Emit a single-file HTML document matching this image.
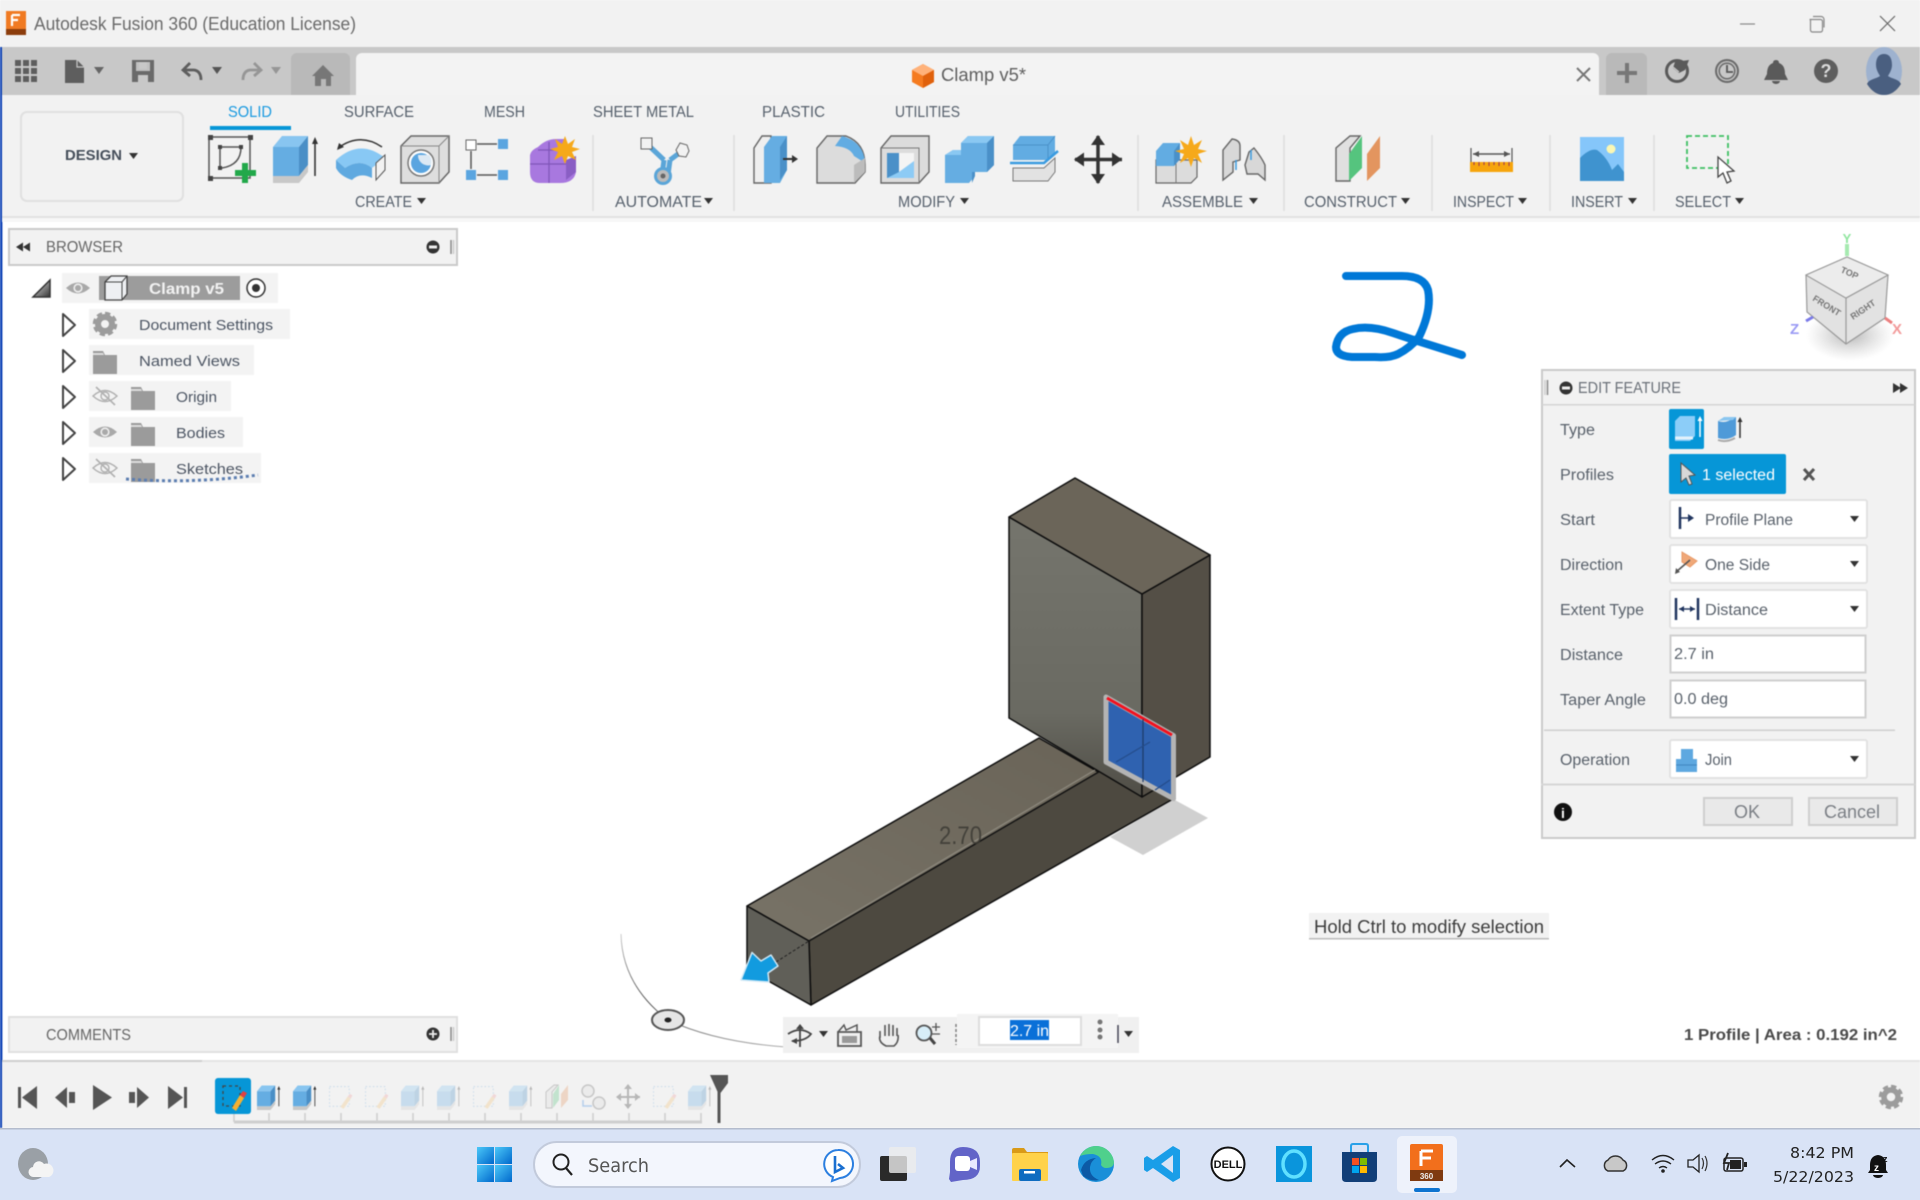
<!DOCTYPE html>
<html><head><meta charset="utf-8"><title>Autodesk Fusion 360</title>
<style>
html,body{margin:0;padding:0;background:#fff;width:1920px;height:1200px;overflow:hidden}
svg{display:block}
text{font-family:"Liberation Sans",sans-serif;fill:#56606c;font-size:15px}
.r{font-size:15.5px}
.l{font-size:15.5px;fill:#59616b}
.t{font-size:15px;fill:#4c5563}
</style></head><body>
<svg width="1920" height="1200" viewBox="0 0 1920 1200" xmlns="http://www.w3.org/2000/svg">
<defs>
<linearGradient id="lf" x1="0" y1="0" x2="0" y2="1"><stop offset="0" stop-color="#75756d"/><stop offset=".7" stop-color="#6a6a62"/><stop offset="1" stop-color="#4f4d46"/></linearGradient>
<linearGradient id="tp" x1="0" y1="1" x2="1" y2="0"><stop offset="0" stop-color="#787367"/><stop offset="1" stop-color="#696357"/></linearGradient>
<linearGradient id="tri" x1="0" y1="0" x2="1" y2="1"><stop offset="0" stop-color="#eee"/><stop offset="1" stop-color="#333"/></linearGradient>
<linearGradient id="arcg" x1="0" y1="0" x2="0" y2="1"><stop offset="0" stop-color="#ccc"/><stop offset=".6" stop-color="#555"/><stop offset="1" stop-color="#aaa"/></linearGradient>
<radialGradient id="sh"><stop offset="0" stop-color="#999" stop-opacity=".7"/><stop offset="1" stop-color="#bbb" stop-opacity="0"/></radialGradient>
<linearGradient id="win" x1="0" y1="0" x2="1" y2="1"><stop offset="0" stop-color="#4cc8f8"/><stop offset="1" stop-color="#0068cc"/></linearGradient>
<g id="ext"><path d="M0 12L9 1H35L26 12Z" fill="#88c5f0"/><path d="M0 12H26V41H0Z" fill="#65ade2"/><path d="M26 12L35 1V30L26 41Z" fill="#4a8fc6"/><path d="M0 41H26L35 30V37L26 48H0Z" fill="#c8c8c8"/><path d="M42 8V41" stroke="#333" stroke-width="1.6"/><path d="M39 9L42 2L45 9Z" fill="#333"/></g>
<g id="sk"><rect x="1" y="3" width="38" height="38" fill="none" stroke="#7aaedc" stroke-width="2" stroke-dasharray="3 4"/><path d="M22 42L36 22L42 26L28 46Z" fill="#f4c478"/><path d="M36 22L42 26L45 20L40 17Z" fill="#f09a9a"/></g>
<g id="eye"><path d="M-12 0Q0 -11 12 0Q0 11 -12 0Z" fill="#a9a9a9"/><circle r="4.6" fill="#eee"/><circle r="3" fill="#a9a9a9"/></g>
<g id="eyx"><path d="M-12 0Q0 -11 12 0Q0 11 -12 0Z" fill="none" stroke="#b0b0b0" stroke-width="1.4"/><circle r="4" fill="none" stroke="#b0b0b0" stroke-width="1.4"/><path d="M-9 -9L10 9" stroke="#b0b0b0" stroke-width="1.6"/></g>
<g id="fo"><path d="M0 1H10L12 5H24V24H0Z" fill="#9b9b9b"/><path d="M0 3H10L11 5H0Z" fill="#ddd"/></g>
<path id="ar" d="M0 0L12 11L0 22V0Z" fill="#fff" stroke="#444" stroke-width="2" stroke-linejoin="round"/>
<path id="ca" d="M0 0H9L4.5 6Z" fill="#333"/>
<path id="cg" d="M0 0H9L4.5 6Z" fill="#333"/>
</defs>

<rect width="1920" height="1200" fill="#fff"/>
<g style="filter:blur(.55px)">
<!-- title -->
<rect width="1920" height="47" fill="#f2f2f2"/>
<rect x="0" y="47" width="2.4" height="1081" fill="#0a3fb4"/>
<path d="M6 11H26V35H6Z" fill="#f07a22"/><path d="M6 29H26V35H6Z" fill="#8c3d0c"/><path d="M12 15H20M12 15V26M12 20H18" stroke="#fff" stroke-width="2.2" fill="none"/>
<text x="34" y="30" font-size="18.5" style="font-size:18.5px;fill:#6a6a6a" textLength="322" lengthAdjust="spacingAndGlyphs">Autodesk Fusion 360 (Education License)</text>
<path d="M1740 24H1755" stroke="#888" stroke-width="1.2"/>
<path d="M1809.5 19.5h11a2 2 0 0 1 2 2v8.500a2 2 0 0 1-2 2h-8a2 2 0 0 1-2-2V19.5z" fill="none" stroke="#888" stroke-width="1.200"/><path d="M1813 16.500h8a3 3 0 0 1 3 3v8" fill="none" stroke="#888" stroke-width="1.200"/>
<path d="M1880 16L1895 31M1895 16L1880 31" stroke="#666" stroke-width="1.200"/>

<!-- tab bar -->
<rect x="2" y="47" width="1918" height="48" fill="#c8c8c8"/>
<path d="M356 95V59a6 6 0 0 1 6-6H1593a6 6 0 0 1 6 6V95Z" fill="#f3f3f3"/>
<path d="M291 95V59a6 6 0 0 1 6-6H344a6 6 0 0 1 6 6V95Z" fill="#b9b9b9"/>
<path d="M1606 95V59a6 6 0 0 1 6-6H1641a6 6 0 0 1 6 6V95Z" fill="#b9b9b9"/>
<!-- grid -->
<g fill="#5e5e5e"><rect x="15" y="60" width="6" height="6"/><rect x="23" y="60" width="6" height="6"/><rect x="31" y="60" width="6" height="6"/><rect x="15" y="68" width="6" height="6"/><rect x="23" y="68" width="6" height="6"/><rect x="31" y="68" width="6" height="6"/><rect x="15" y="76" width="6" height="6"/><rect x="23" y="76" width="6" height="6"/><rect x="31" y="76" width="6" height="6"/></g>
<path d="M65 60H77L84 67V83H65Z" fill="#5e5e5e"/><path d="M77 60V67H84" fill="none" stroke="#c8c8c8" stroke-width="1.200"/>
<path d="M94 67H104L99 74Z" fill="#666"/>
<path d="M132 60H154V82H132Z" fill="#6a6a6a"/><rect x="136" y="62" width="14" height="9" fill="#c0c0c0"/><rect x="139" y="62" width="8" height="7" fill="#c8c8c8"/><rect x="138" y="75" width="10" height="7" fill="#c8c8c8"/>
<path d="M190 63L183 70L190 76M183 70H194Q201 71 201 80" fill="none" stroke="#5e5e5e" stroke-width="2.800"/>
<path d="M212 67H222L217 74Z" fill="#555"/>
<path d="M254 63L261 70L254 76M261 70H250Q243 71 243 80" fill="none" stroke="#969696" stroke-width="2.800"/>
<path d="M271 67H281L276 74Z" fill="#969696"/>
<path d="M323 65L312 76H315V86H321V79H326V86H331V76H334Z" fill="#777"/>
<!-- doc tab -->
<path d="M923 64L934 70V82L923 88L912 82V70Z" fill="#f57b20"/><path d="M923 64L934 70L923 76L912 70Z" fill="#ffb27a"/><path d="M923 76L934 70V82L923 88Z" fill="#e0610c"/>
<text x="941" y="81" style="font-size:18px;fill:#5f5f5f" textLength="85" lengthAdjust="spacingAndGlyphs">Clamp v5*</text>
<path d="M1577 68L1590 81M1590 68L1577 81" stroke="#777" stroke-width="2"/>
<path d="M1627 63V83M1617 73H1637" stroke="#777" stroke-width="4"/>
<!-- right icons -->
<circle cx="1677" cy="71" r="10.500" fill="none" stroke="#5a5a5a" stroke-width="3"/><path d="M1675 62L1689 60L1685 70L1679 73L1673 68Z" fill="#5a5a5a"/><path d="M1679 72L1673 67" stroke="#c8c8c8" stroke-width="1.200"/>
<circle cx="1727" cy="71" r="12" fill="#6a6a6a"/><circle cx="1727" cy="71" r="10" fill="#c0c0c0"/><circle cx="1727" cy="71" r="8.500" fill="#6a6a6a"/><circle cx="1727" cy="71" r="7" fill="#c8c8c8"/><path d="M1727 65V72H1733" fill="none" stroke="#555" stroke-width="1.800"/>
<path d="M1776 60q3 0 3 3q6 2 6 11l3 6h-24l3-6q0-9 6-11q0-3 3-3Z" fill="#5a5a5a"/><path d="M1772 81h8a4 3 0 0 1-8 0Z" fill="#5a5a5a"/>
<circle cx="1826" cy="71" r="12" fill="#5e5e5e"/><text x="1826" y="77" text-anchor="middle" style="font-size:18px;font-weight:bold;fill:#ddd">?</text>
<ellipse cx="1884" cy="71" rx="18" ry="24" fill="#9eb2cf"/><path d="M1884 54c6 0 8 5 8 11c0 5-3 9-4 11c4 3 11 3 13 8q-7 11-17 11t-17-11c2-5 9-5 13-8c-1-2-4-6-4-11c0-6 2-11 8-11Z" fill="#4a5f80"/>

<!-- ribbon -->
<rect x="2" y="95" width="1918" height="123" fill="#f2f2f2"/><rect x="2" y="216" width="1918" height="2" fill="#e2e2e2"/><rect x="2" y="218" width="1918" height="4" fill="#f7f7f7"/>
<rect x="21" y="112" width="162" height="89" rx="6" fill="#f2f2f2" stroke="#e0e0e0" stroke-width="2"/>
<text x="65" y="160" style="font-size:15px;font-weight:bold;fill:#454e5a" textLength="57" lengthAdjust="spacingAndGlyphs">DESIGN</text>
<use href="#ca" x="129" y="153"/>
<text x="228" y="117" class="r" style="fill:#1a9ae0" textLength="44" lengthAdjust="spacingAndGlyphs">SOLID</text>
<rect x="210" y="126" width="81" height="4" fill="#0696d7"/>
<text x="344" y="117" class="r" textLength="70" lengthAdjust="spacingAndGlyphs">SURFACE</text>
<text x="484" y="117" class="r" textLength="41" lengthAdjust="spacingAndGlyphs">MESH</text>
<text x="593" y="117" class="r" textLength="101" lengthAdjust="spacingAndGlyphs">SHEET METAL</text>
<text x="762" y="117" class="r" textLength="63" lengthAdjust="spacingAndGlyphs">PLASTIC</text>
<text x="895" y="117" class="r" textLength="65" lengthAdjust="spacingAndGlyphs">UTILITIES</text>
<!-- separators -->
<g fill="#e2e2e2"><rect x="592" y="135" width="2" height="76"/><rect x="733" y="135" width="2" height="76"/><rect x="1137" y="135" width="2" height="76"/><rect x="1283" y="135" width="2" height="76"/><rect x="1431" y="135" width="2" height="76"/><rect x="1549" y="135" width="2" height="76"/><rect x="1653" y="135" width="2" height="76"/></g>
<!-- labels -->
<text x="355" y="207" class="r" textLength="57" lengthAdjust="spacingAndGlyphs">CREATE</text><use href="#cg" x="417" y="198"/>
<text x="615" y="207" class="r" textLength="87" lengthAdjust="spacingAndGlyphs">AUTOMATE</text><use href="#cg" x="704" y="198"/>
<text x="898" y="207" class="r" textLength="57" lengthAdjust="spacingAndGlyphs">MODIFY</text><use href="#cg" x="960" y="198"/>
<text x="1162" y="207" class="r" textLength="81" lengthAdjust="spacingAndGlyphs">ASSEMBLE</text><use href="#cg" x="1249" y="198"/>
<text x="1304" y="207" class="r" textLength="93" lengthAdjust="spacingAndGlyphs">CONSTRUCT</text><use href="#cg" x="1401" y="198"/>
<text x="1453" y="207" class="r" textLength="61" lengthAdjust="spacingAndGlyphs">INSPECT</text><use href="#cg" x="1518" y="198"/>
<text x="1571" y="207" class="r" textLength="52" lengthAdjust="spacingAndGlyphs">INSERT</text><use href="#cg" x="1628" y="198"/>
<text x="1675" y="207" class="r" textLength="56" lengthAdjust="spacingAndGlyphs">SELECT</text><use href="#cg" x="1735" y="198"/>
<!-- sketch -->
<g><rect x="209" y="137" width="41" height="41" fill="none" stroke="#555" stroke-width="1.500"/><g fill="#444"><rect x="208" y="135" width="5" height="5"/><rect x="248" y="135" width="5" height="5"/><rect x="208" y="176" width="5" height="5"/></g><path d="M220 147V169M220 147H241M241 147Q241 165 222 168" fill="none" stroke="#555" stroke-width="1.500"/><g fill="#444"><rect x="218" y="145" width="4" height="4"/><rect x="239" y="145" width="4" height="4"/><rect x="218" y="166" width="4" height="4"/></g><path d="M245 163V183M235 173H256" stroke="#22a84a" stroke-width="6"/></g>
<use href="#ext" x="273" y="135"/>
<!-- revolve -->
<path d="M338 148Q360 132 382 147" fill="none" stroke="#333" stroke-width="1.400"/><path d="M337 150l2-7l5 4Z" fill="#333"/>
<path d="M336 160Q360 138 385 158L372 168Q360 158 345 168Z" fill="#88c8f4"/><path d="M336 160L345 168Q360 158 372 168V178Q360 172 352 180Q340 176 336 168Z" fill="#5fa9e0"/><path d="M376 163L385 155V170L376 180Z" fill="#f2f2f2" stroke="#555"/>
<!-- hole -->
<path d="M401 146L411 136H449V172L439 183H401Z" fill="#dedede" stroke="#666" stroke-width="1.500"/><path d="M401 146H439V183M439 146L449 136" fill="none" stroke="#888"/><circle cx="421" cy="163" r="13" fill="#fff" stroke="#777" stroke-width="1.500"/><circle cx="421" cy="163" r="10" fill="#5aa5e0"/><path d="M418 155a10 10 0 0 0 13 10a10 10 0 0 0-2 -10Z" fill="#dce9f4"/>
<!-- pattern -->
<rect x="466" y="140" width="10" height="10" fill="#fff" stroke="#666"/><rect x="498" y="139" width="10" height="10" fill="#5aa5e0"/><rect x="466" y="170" width="10" height="10" fill="#5aa5e0"/><rect x="498" y="170" width="10" height="10" fill="#5aa5e0"/><path d="M477 144H497M471 151V169M477 175H497" stroke="#555" stroke-width="1.500"/>
<!-- form -->
<path d="M538 147Q546 139 556 139H566V160L576 157V172Q574 183 560 183H540Q530 183 530 172V155Q531 150 538 147Z" fill="#a878df"/><path d="M530 164H566M549 142V183M538 150H566" stroke="#7f55b8" stroke-width="1.200" fill="none"/><path d="M566 160L576 156V172L566 180Z" fill="#8a5ec4"/>
<path d="M565 136l3 8 7-5-3 8 8 2-8 3 4 8-8-4-3 8-3-8-8 4 4-8-8-3 8-2-3-8 7 5Z" fill="#f6a91a"/>
<!-- automate -->
<path d="M646 143L664 160M686 148L670 160M664 160L662 175M670 160L668 175" stroke="#5aa5d8" stroke-width="5" fill="none"/><rect x="641" y="138" width="11" height="11" fill="#f2f2f2" stroke="#666"/><path d="M680 143l7 2 2 6-3 6-7-1-3-6Z" fill="#f2f2f2" stroke="#666"/><circle cx="663" cy="176" r="7.500" fill="#bbb" stroke="#5aa5d8" stroke-width="3"/><circle cx="663" cy="176" r="2.500" fill="#666"/>
<!-- modify -->
<path d="M754 183V148L762 136H771V183Z" fill="#efefef" stroke="#666" stroke-width="1.400"/><path d="M764 147H780V183H764Z" fill="#65ade2"/><path d="M764 147L772 136H787V170L780 183V147Z" fill="#65ade2"/><path d="M780 147L787 136V170L780 180Z" fill="#4a90c8"/><path d="M783 159H794" stroke="#333" stroke-width="2"/><path d="M792 155L798 159L792 163Z" fill="#333"/>
<path d="M817 183V148L827 136H846Q865 143 865 165V172L855 183Z" fill="#dcdcdc" stroke="#666" stroke-width="1.400"/><path d="M835 146L842 136Q864 142 865 163L854 156Q850 147 835 146Z" fill="#62ace2"/><path d="M854 165L865 158V172L854 183Z" fill="#bcbcbc"/>
<path d="M881 183V148L891 136H929V172L919 183Z" fill="#dcdcdc" stroke="#666" stroke-width="1.400"/><path d="M881 148H919V183" fill="none" stroke="#777"/><rect x="887" y="153" width="27" height="25" fill="#f4f4f4"/><path d="M887 153H899V172H914V178H887Z" fill="#4a90c8"/><path d="M899 172L914 161V178H887Z" fill="#8dcbf5"/>
<path d="M945 183V155L953 150H961V143L968 136H994V165L987 172H975V176L969 183Z" fill="#65ade2"/><path d="M961 143L968 136H994L987 143H961ZM945 155L953 150H961V155Z" fill="#8ac8f2"/><path d="M987 143L994 136V165L987 172ZM972 172H975V176L972 183Z" fill="#4a90c8"/>
<path d="M1013 145L1020 136H1055L1055 153L1048 160H1013Z" fill="#62ace2"/><path d="M1013 145H1048V160M1048 145L1055 136" stroke="#4a90c8" fill="none"/><path d="M1010 163H1044L1058 151" stroke="#3a9be0" stroke-width="2.500" fill="none"/><path d="M1013 168H1044L1055 158V172L1048 181H1013Z" fill="#e2e2e2" stroke="#777"/>
<path d="M1098 136V183M1075 159.500H1122" stroke="#333" stroke-width="3.500"/><path d="M1098 135l7 10h-14ZM1098 184l7-10h-14ZM1074 159.500l10-7v14ZM1122 159.500l-10-7v14Z" fill="#333"/>
<!-- assemble -->
<path d="M1156 183V160H1197V177L1191 183Z" fill="#dcdcdc" stroke="#666" stroke-width="1.200"/><path d="M1176 160V183" stroke="#777"/><path d="M1156 151L1163 143H1180V159L1174 166H1156Z" fill="#62ace2"/><path d="M1174 151L1180 143V159L1174 166Z" fill="#4a90c8"/>
<path d="M1191 136l3 9 8-5-4 9 9 2-9 3 4 9-8-5-3 9-3-9-8 5 4-9-9-3 9-2-4-9 8 5Z" fill="#f6a91a"/>
<path d="M1223 180V150L1232 139Q1240 140 1240 146V160L1233 162V172ZM1245 165L1249 152L1254 148Q1262 158 1265 165V180L1258 174H1247Z" fill="#d8d8d8" stroke="#666" stroke-width="1.400"/><path d="M1251 150V160M1236 160V170" stroke="#3a9be0" stroke-width="1.500"/>
<!-- construct -->
<path d="M1336 181V148L1350 136H1360L1350 148V181Z" fill="#e0e0e0" stroke="#666" stroke-width="1.400"/><path d="M1349 181V154L1362 136V168Z" fill="#55c47e"/><path d="M1367 181V154L1380 136V168Z" fill="#e3955f"/>
<!-- inspect -->
<path d="M1471 148V170M1512 148V170" stroke="#555" stroke-width="1.200"/><path d="M1473 154H1510" stroke="#555" stroke-width="1.400"/><path d="M1473 154l6-3v6ZM1510 154l-6-3v6Z" fill="#555"/><rect x="1470" y="162" width="43" height="10" fill="#f6a50d"/><path d="M1474 162v3M1479 162v4M1484 162v3M1489 162v4M1494 162v3M1499 162v4M1504 162v3M1509 162v4" stroke="#935" stroke-width="1"/>
<!-- insert -->
<rect x="1580" y="137" width="44" height="44" fill="#85c6fa"/><path d="M1580 158Q1590 148 1597 150Q1607 157 1612 170L1618 164L1624 172V181H1580Z" fill="#3f93cf"/><circle cx="1611" cy="149" r="4.500" fill="#fbf7b4"/>
<!-- select -->
<rect x="1687" y="136" width="41" height="32" fill="none" stroke="#3dbf62" stroke-width="1.800" stroke-dasharray="5 3"/><path d="M1718 157V177L1723 173L1727 183L1731 181L1727 172L1734 171Z" fill="#fff" stroke="#444" stroke-width="1.300"/>

<!-- browser -->
<rect x="9" y="229" width="448" height="36" fill="#f2f2f2" stroke="#cacaca" stroke-width="2"/>
<path d="M16 247l7-4.500v9ZM23 247l7-4.500v9Z" fill="#333"/>
<text x="46" y="252" class="t" style="font-size:15.500px;fill:#666" textLength="77" lengthAdjust="spacingAndGlyphs">BROWSER</text>
<circle cx="433" cy="247" r="6.500" fill="#333"/><rect x="429" y="245.500" width="8" height="3" fill="#eee"/>
<path d="M451 240V254" stroke="#888" stroke-width="1.500"/><path d="M453.500 240V254" stroke="#ccc" stroke-width="1.500"/>
<!-- row 0 -->
<path d="M50 280V297H33Z" fill="url(#tri)" stroke="#333" stroke-width="1.500"/>
<rect x="62" y="273" width="216" height="30" fill="#f3f3f3"/><use href="#eye" x="78" y="288"/>
<rect x="99" y="276" width="141" height="24" fill="#9c9c9c"/>
<path d="M105 282L111 276H127V294L122 300H105Z" fill="#eef0f3" stroke="#444" stroke-width="1.300"/><path d="M105 282H122V300M122 282L127 276" fill="none" stroke="#444" stroke-width="1"/>
<text x="149" y="294" style="font-size:15.500px;font-weight:bold;fill:#f2f2f2" textLength="75" lengthAdjust="spacingAndGlyphs">Clamp v5</text>
<circle cx="256" cy="288" r="9" fill="#fff" stroke="#333" stroke-width="1.500"/><circle cx="256" cy="288" r="4" fill="#333"/>
<!-- rows -->
<use href="#ar" x="63" y="314"/><use href="#ar" x="63" y="350"/><use href="#ar" x="63" y="386"/><use href="#ar" x="63" y="422"/><use href="#ar" x="63" y="458"/>
<rect x="89" y="309" width="201" height="30" fill="#f3f3f3"/>
<rect x="89" y="345" width="165" height="30" fill="#f3f3f3"/>
<rect x="89" y="381" width="142" height="30" fill="#f3f3f3"/>
<rect x="89" y="417" width="154" height="30" fill="#f3f3f3"/>
<rect x="89" y="453" width="172" height="30" fill="#f3f3f3"/>
<circle cx="105" cy="324" r="7" fill="none" stroke="#9c9c9c" stroke-width="6"/><circle cx="105" cy="324" r="10.500" fill="none" stroke="#9c9c9c" stroke-width="3.500" stroke-dasharray="5.200 3"/>
<use href="#fo" x="93" y="350"/><use href="#eyx" x="105" y="396"/><use href="#fo" x="131" y="386"/><use href="#eye" x="105" y="432"/><use href="#fo" x="131" y="422"/><use href="#eyx" x="105" y="468"/><use href="#fo" x="131" y="458"/>
<text x="139" y="330" class="t" textLength="134" lengthAdjust="spacingAndGlyphs">Document Settings</text>
<text x="139" y="366" class="t" textLength="101" lengthAdjust="spacingAndGlyphs">Named Views</text>
<text x="176" y="402" class="t" textLength="41" lengthAdjust="spacingAndGlyphs">Origin</text>
<text x="176" y="438" class="t" textLength="49" lengthAdjust="spacingAndGlyphs">Bodies</text>
<text x="176" y="474" class="t" textLength="67" lengthAdjust="spacingAndGlyphs">Sketches</text>
<path d="M126 479Q192 484 258 475" stroke="#5b7db0" stroke-width="3" stroke-dasharray="3 3" fill="none"/>

<!-- comments -->
<rect x="9" y="1017" width="448" height="35" fill="#f2f2f2" stroke="#e0e0e0" stroke-width="2"/>
<text x="46" y="1040" style="font-size:15.500px;fill:#666" textLength="85" lengthAdjust="spacingAndGlyphs">COMMENTS</text>
<circle cx="433" cy="1034" r="6.500" fill="#333"/><path d="M429 1034H437M433 1030V1038" stroke="#eee" stroke-width="1.800"/>
<path d="M451 1027V1041" stroke="#888" stroke-width="1.500"/><path d="M453.500 1027V1041" stroke="#ccc" stroke-width="1.500"/>

<!-- hand-drawn 2 -->
<path d="M1346 276H1402Q1424 276 1428 290Q1432 310 1419 337Q1410 348 1398 354Q1390 358 1375 357L1352 357Q1336 356 1336 347Q1338 332 1353 329Q1370 325 1393 333L1411 339L1462 355" fill="none" stroke="#0078d7" stroke-width="8" stroke-linecap="round" stroke-linejoin="round"/>

<!-- viewcube -->
<ellipse cx="1850" cy="335" rx="44" ry="26" fill="url(#sh)"/>
<path d="M1847 257L1888 275L1885 318L1846 344L1807 312L1806 275Z" fill="#e2e2e2" stroke="#999" stroke-width="1.200"/>
<path d="M1806 275L1846 298L1888 275M1846 298V344" fill="none" stroke="#999" stroke-width="1.200"/>
<path d="M1847 257L1888 275L1846 298L1806 275Z" fill="#ececec" stroke="#999"/>
<path d="M1847 244V256" stroke="#a6eab0" stroke-width="4"/>
<text x="1847" y="243" text-anchor="middle" style="font-size:13px;fill:#8fe59e;font-weight:bold">Y</text>
<path d="M1806 321L1813 317" stroke="#7a7ae8" stroke-width="3"/><text x="1790" y="334" style="font-size:15px;fill:#9a9af4;font-weight:bold">Z</text>
<path d="M1885 318L1892 323" stroke="#ec8080" stroke-width="3"/><text x="1892" y="334" style="font-size:15px;fill:#f29a9a;font-weight:bold">X</text>
<text transform="translate(1840,272) rotate(24)" style="font-size:9px;fill:#777;font-weight:bold">TOP</text>
<text transform="translate(1812,300) rotate(32)" style="font-size:9px;fill:#777;font-weight:bold">FRONT</text>
<text transform="translate(1853,320) rotate(-34)" style="font-size:9px;fill:#777;font-weight:bold">RIGHT</text>

<!-- model -->
<path d="M1110 837L1173 799L1208 818L1143 855Z" fill="#d0d0d0"/>
<path d="M747 906L1039 738L1142 797L809 941Z" fill="url(#tp)" stroke="#0e0e0e" stroke-width="1.500" stroke-linejoin="round"/>
<path d="M809 941L1102 770L1173 772V799L811 1005Z" fill="#4d4940" stroke="#0e0e0e" stroke-width="1.500" stroke-linejoin="round"/>
<path d="M747 906L809 941L811 1005L747 969Z" fill="#605f58" stroke="#0e0e0e" stroke-width="1.500" stroke-linejoin="round"/>
<path d="M811 938L1100 767" stroke="#8d897e" stroke-width="1.200"/><path d="M809 941L1102 770" stroke="#161616" stroke-width="1"/>
<path d="M1009 517L1142 594V797L1009 718Z" fill="url(#lf)" stroke="#0e0e0e" stroke-width="1.500" stroke-linejoin="round"/>
<path d="M1142 594L1210 555V757L1142 797Z" fill="#544f46" stroke="#0e0e0e" stroke-width="1.500" stroke-linejoin="round"/>
<path d="M1075 478L1210 555L1142 594L1009 517Z" fill="#6b6559" stroke="#0e0e0e" stroke-width="1.500" stroke-linejoin="round"/>
<text x="939" y="844" style="font-size:25px;fill:#3c3a34;opacity:.85" textLength="43" lengthAdjust="spacingAndGlyphs">2.70</text>
<!-- blue plane -->
<path d="M1106 697L1173.500 735.500V798.700L1106 762Z" fill="#2f62b0" stroke="#b4b4b4" stroke-width="5" stroke-linejoin="round"/>
<path d="M1107 698L1172 735" stroke="#f2101e" stroke-width="3"/>
<path d="M1143 719V782" stroke="#1d3a66" stroke-width="1.200"/><path d="M1116 762L1150 742" stroke="#244c8a" stroke-width="1.200"/><path d="M1155 790L1170 780" stroke="#244c8a" stroke-width="1.200"/>
<!-- arrow -->
<path d="M776 962L809 941" stroke="#222" stroke-width="1" stroke-dasharray="3 2"/>
<path d="M741 980L752 952.500L761 961L771 955L778 966L768 973L769 982Z" fill="#129bdf" stroke="#d0e8f6" stroke-width="1.500" stroke-linejoin="round"/>
<!-- arc -->
<path d="M621 934Q622 985 668 1020Q715 1042 786 1047" fill="none" stroke="url(#arcg)" stroke-width="1"/>
<ellipse cx="668" cy="1020" rx="16" ry="10" fill="#e6e6e6" stroke="#555" stroke-width="2"/><ellipse cx="668" cy="1020" rx="3.500" ry="2.500" fill="#222"/>

<!-- nav bar -->
<rect x="783" y="1017" width="356" height="36" fill="#f0f0f0"/>
<rect x="957" y="1014" width="161" height="34" fill="#f4f4f4"/>
<rect x="979" y="1017" width="102" height="28" fill="#fff" stroke="#ddd" stroke-width="2"/>
<rect x="1010" y="1020" width="39" height="20" fill="#0a70d8"/>
<text x="1010" y="1036" style="font-size:15.500px;fill:#fff" textLength="39" lengthAdjust="spacingAndGlyphs">2.7 in</text>
<g fill="#777"><circle cx="1100" cy="1022" r="2.500"/><circle cx="1100" cy="1030" r="2.500"/><circle cx="1100" cy="1037" r="2.500"/></g>
<path d="M1118 1025V1043" stroke="#445" stroke-width="1.500"/><use href="#ca" x="1124" y="1031"/>
<path d="M800 1025V1047M788 1034Q800 1026 811 1034Q806 1041 792 1041" fill="none" stroke="#444" stroke-width="1.800"/><path d="M796 1029l4-5 4 5ZM797 1038l-6 3 6 3Z" fill="#444"/>
<use href="#ca" x="819" y="1031"/>
<path d="M838 1032H861V1046H838Z" fill="none" stroke="#555" stroke-width="1.800"/><rect x="842" y="1036" width="15" height="7" fill="#999"/><path d="M838 1032L844 1025L846 1030L857 1025V1032" fill="none" stroke="#555" stroke-width="1.500"/>
<path d="M880 1038V1031M885 1036V1025M889 1036V1024M893 1036V1025M897 1036V1028M880 1036Q878 1042 886 1046H894Q899 1042 898 1035" fill="none" stroke="#555" stroke-width="1.600"/>
<circle cx="924" cy="1033" r="7.500" fill="#d8eef8" stroke="#555" stroke-width="1.800"/><path d="M930 1038L935 1044" stroke="#444" stroke-width="3"/><path d="M932 1027H940M936 1023V1031M932 1034H940" stroke="#555" stroke-width="1.300"/>
<path d="M956 1024V1045" stroke="#777" stroke-width="1.400" stroke-dasharray="3 2"/>

<!-- tooltip & status -->
<rect x="1309" y="913" width="240" height="26" fill="#f2f2f2"/><rect x="1309" y="938" width="240" height="1.500" fill="#bbb"/>
<text x="1314" y="933" style="font-size:18px;fill:#3c3c3c" textLength="230" lengthAdjust="spacingAndGlyphs">Hold Ctrl to modify selection</text>
<text x="1684" y="1040" style="font-size:15.500px;font-weight:bold;fill:#4a4a4a" textLength="213" lengthAdjust="spacingAndGlyphs">1 Profile | Area : 0.192 in^2</text>

<!-- edit feature -->
<rect x="1542" y="370" width="373" height="468" fill="#f2f2f2" stroke="#cacaca" stroke-width="2"/>
<rect x="1542" y="404" width="373" height="1.500" fill="#d4d4d4"/>
<path d="M1545 380V395" stroke="#ccc" stroke-width="1.500"/><path d="M1547.500 380V395" stroke="#888" stroke-width="1.500"/>
<circle cx="1566" cy="388" r="6.500" fill="#333"/><rect x="1562" y="386.500" width="8" height="3" fill="#eee"/>
<text x="1578" y="393" style="font-size:15.500px;fill:#6a7078" textLength="103" lengthAdjust="spacingAndGlyphs">EDIT FEATURE</text>
<path d="M1893 383l8 5-8 5ZM1900 383l8 5-8 5Z" fill="#333"/>
<g class="lab">
<text x="1560" y="435" class="l" textLength="35" lengthAdjust="spacingAndGlyphs">Type</text>
<text x="1560" y="480" class="l" textLength="54" lengthAdjust="spacingAndGlyphs">Profiles</text>
<text x="1560" y="525" class="l" textLength="35" lengthAdjust="spacingAndGlyphs">Start</text>
<text x="1560" y="570" class="l" textLength="63" lengthAdjust="spacingAndGlyphs">Direction</text>
<text x="1560" y="615" class="l" textLength="84" lengthAdjust="spacingAndGlyphs">Extent Type</text>
<text x="1560" y="660" class="l" textLength="63" lengthAdjust="spacingAndGlyphs">Distance</text>
<text x="1560" y="705" class="l" textLength="86" lengthAdjust="spacingAndGlyphs">Taper Angle</text>
<text x="1560" y="765" class="l" textLength="70" lengthAdjust="spacingAndGlyphs">Operation</text>
</g>
<!-- type -->
<rect x="1669" y="409" width="35" height="40" rx="2" fill="#0696d7"/>
<path d="M1675 421L1680 416H1695V436L1690 441H1675Z" fill="#8ccdf8"/><path d="M1675 438H1693" stroke="#e4f2fb" stroke-width="3"/><path d="M1700 419V437" stroke="#fff" stroke-width="1.500"/><path d="M1697.500 421L1700 416L1702.500 421Z" fill="#fff"/>
<path d="M1718 421Q1726 424 1733 418L1736 417V435Q1728 441 1718 438Z" fill="#4f9ad8"/><path d="M1718 421L1724 417H1736L1733 420Z" fill="#8ac6f0"/><path d="M1718 440Q1726 443 1735 438" stroke="#aaa" stroke-width="2" fill="none"/><path d="M1740 420V438" stroke="#333" stroke-width="1.500"/><path d="M1737.500 422L1740 417L1742.500 422Z" fill="#333"/>
<!-- profiles -->
<rect x="1669" y="454" width="117" height="40" rx="2" fill="#0696d7"/>
<path d="M1681 463V482L1686 478L1689 485L1692 484L1689 476L1695 475Z" fill="#d8d8d8" stroke="#555" stroke-width="1"/>
<text x="1702" y="480" style="font-size:15.500px;fill:#fff" textLength="73" lengthAdjust="spacingAndGlyphs">1 selected</text>
<path d="M1804 469L1814 480M1814 469L1804 480" stroke="#555" stroke-width="3"/>
<!-- selects -->
<rect x="1670" y="500" width="197" height="38" rx="2" fill="#fff" stroke="#e2e2e2" stroke-width="2"/>
<rect x="1670" y="545" width="197" height="38" rx="2" fill="#fff" stroke="#e2e2e2" stroke-width="2"/>
<rect x="1670" y="590" width="197" height="38" rx="2" fill="#fff" stroke="#e2e2e2" stroke-width="2"/>
<rect x="1670" y="740" width="197" height="38" rx="2" fill="#fff" stroke="#e2e2e2" stroke-width="2"/>
<rect x="1670.500" y="635.500" width="195" height="37" fill="#fff" stroke="#cfcfcf" stroke-width="2"/>
<rect x="1670.500" y="680.500" width="195" height="37" fill="#fff" stroke="#cfcfcf" stroke-width="2"/>
<use href="#cg" x="1850" y="516"/><use href="#cg" x="1850" y="561"/><use href="#cg" x="1850" y="606"/><use href="#cg" x="1850" y="756"/>
<text x="1705" y="525" class="l" textLength="88" lengthAdjust="spacingAndGlyphs">Profile Plane</text>
<text x="1705" y="570" class="l" textLength="65" lengthAdjust="spacingAndGlyphs">One Side</text>
<text x="1705" y="615" class="l" textLength="63" lengthAdjust="spacingAndGlyphs">Distance</text>
<text x="1674" y="659" class="l" textLength="40" lengthAdjust="spacingAndGlyphs">2.7 in</text>
<text x="1674" y="704" class="l" textLength="54" lengthAdjust="spacingAndGlyphs">0.0 deg</text>
<text x="1705" y="765" class="l" textLength="27" lengthAdjust="spacingAndGlyphs">Join</text>
<path d="M1680 507V529" stroke="#20355f" stroke-width="2.500"/><path d="M1680 518H1690" stroke="#20355f" stroke-width="1.500"/><path d="M1688 514L1694 518L1688 522Z" fill="#20355f"/>
<path d="M1682 552L1697 561L1690 567L1682 562Z" fill="#f0a878" stroke="#e89a68"/><path d="M1676 572L1690 560" stroke="#555" stroke-width="1.600"/><path d="M1675 574l1-6 4 4Z" fill="#555"/>
<path d="M1676 598V620M1698 598V620" stroke="#20355f" stroke-width="2.500"/><path d="M1679 609H1695" stroke="#20355f" stroke-width="1.400"/><path d="M1679 609l5-3v6ZM1695 609l-5-3v6Z" fill="#20355f"/>
<path d="M1681 749H1693V759H1697V772H1676V759H1681Z" fill="#5ea8e0"/><path d="M1676 765H1697" stroke="#3f86c0"/>
<rect x="1544" y="729.500" width="351" height="1.500" fill="#cfcfcf"/>
<rect x="1541" y="783.500" width="374" height="2" fill="#d6d6d6"/>
<circle cx="1563" cy="812" r="9" fill="#111"/><text x="1563" y="818" text-anchor="middle" style="font-size:14px;font-weight:bold;fill:#fff">i</text>
<rect x="1704" y="798" width="88" height="27" fill="#e9e9e9" stroke="#cfcfcf" stroke-width="2"/>
<rect x="1809" y="798" width="88" height="27" fill="#e9e9e9" stroke="#cfcfcf" stroke-width="2"/>
<text x="1747" y="818" text-anchor="middle" style="font-size:18px;fill:#7b7f85">OK</text>
<text x="1852" y="818" text-anchor="middle" style="font-size:18px;fill:#7b7f85">Cancel</text>

<!-- timeline -->
<rect x="2" y="1060" width="1918" height="68" fill="#f2f2f2"/><rect x="2" y="1060" width="1918" height="2" fill="#e4e4e4"/><rect x="2" y="1060" width="200" height="2" fill="#cfcfcf"/>
<g fill="#555"><rect x="18" y="1087" width="3" height="21"/><path d="M37 1086V1109L22 1097.500Z"/><path d="M55 1097.500L67 1087V1108Z"/><rect x="69" y="1092" width="6" height="11"/><path d="M93 1085L112 1097.500L93 1110Z"/><rect x="129" y="1092" width="6" height="11"/><path d="M137 1087L149 1097.500L137 1108Z"/><path d="M168 1086L183 1097.500L168 1109Z"/><rect x="184" y="1087" width="3" height="21"/></g>
<path d="M234 1122H702" stroke="#cfcfcf" stroke-width="3"/>
<path d="M234 1113V1122M269 1113V1122M305 1113V1122M341 1113V1122M377 1113V1122M413 1113V1122M449 1113V1122M485 1113V1122M521 1113V1122M557 1113V1122M593 1113V1122M629 1113V1122M665 1113V1122M701 1113V1122" stroke="#cfcfcf" stroke-width="1.600"/>
<rect x="215" y="1078" width="36" height="36" rx="3" fill="#0696d7"/>
<rect x="223" y="1086" width="17" height="20" fill="none" stroke="#444" stroke-width="1.300" stroke-dasharray="3 3"/><path d="M232 1108L240 1095L244 1098L236 1111Z" fill="#f4b030"/><path d="M240 1095L244 1098L247 1093L243 1091Z" fill="#e04040"/>
<use href="#ext" transform="translate(257 1085) scale(.52)"/><use href="#ext" transform="translate(293 1085) scale(.52)"/>
<g opacity=".3"><use href="#sk" transform="translate(329 1085) scale(.52)"/><use href="#sk" transform="translate(365 1085) scale(.52)"/><use href="#ext" transform="translate(401 1085) scale(.52)"/><use href="#ext" transform="translate(437 1085) scale(.52)"/><use href="#sk" transform="translate(473 1085) scale(.52)"/><use href="#ext" transform="translate(509 1085) scale(.52)"/>
<path d="M546 1108V1092L554 1085H558L552 1092V1108Z" fill="#ddd" stroke="#666"/><path d="M553 1108V1094L559 1085V1100Z" fill="#55c47e"/><path d="M561 1108V1094L568 1085V1100Z" fill="#e3955f"/>
<circle cx="588" cy="1091" r="6" fill="#ddd" stroke="#666" stroke-width="1.500"/><circle cx="599" cy="1103" r="6" fill="#ddd" stroke="#666" stroke-width="1.500"/><path d="M583 1100V1106H592" stroke="#2a7de0" stroke-width="1.500" fill="none"/>
<path d="M628 1085V1108M617 1097H640" stroke="#333" stroke-width="2"/><path d="M628 1084l4 5h-8ZM628 1109l4-5h-8ZM616 1097l5-4v8ZM640 1097l-5-4v8Z" fill="#333"/>
<use href="#sk" transform="translate(653 1085) scale(.52)"/><use href="#ext" transform="translate(688 1085) scale(.52)"/></g>
<path d="M710 1075H728V1083L719 1095Z" fill="#555"/><path d="M719 1090V1123" stroke="#555" stroke-width="3"/>
<circle cx="1891" cy="1097" r="7" fill="none" stroke="#9c9c9c" stroke-width="5.500"/><circle cx="1891" cy="1097" r="10.500" fill="none" stroke="#9c9c9c" stroke-width="3.500" stroke-dasharray="5.200 3"/>
</g>

<!-- taskbar -->
<rect x="0" y="1128" width="1920" height="72" fill="#d9e3f6"/><rect x="0" y="1128" width="1920" height="1.500" fill="#b4bccd"/>
<ellipse cx="33" cy="1164" rx="15" ry="16" fill="#9aa0a6"/><path d="M34 1177a5 5 0 0 1-1-10a6 6 0 0 1 11-3a6 6 0 0 1 5 13Z" fill="#f4f4f4"/>
<g fill="url(#win)"><rect x="477" y="1147" width="17" height="17"/><rect x="495" y="1147" width="17" height="17"/><rect x="477" y="1165" width="17" height="17"/><rect x="495" y="1165" width="17" height="17"/></g>
<rect x="534" y="1142" width="326" height="45" rx="22.500" fill="#f3f6fd" stroke="#c2cadb" stroke-width="2"/>
<circle cx="561" cy="1162" r="7.500" fill="none" stroke="#222" stroke-width="2"/><path d="M566 1168L572 1175" stroke="#222" stroke-width="2.200"/>
<text x="588" y="1172" style="font-family:'DejaVu Sans',sans-serif;font-size:19px;fill:#555" textLength="61" lengthAdjust="spacingAndGlyphs">Search</text>
<path d="M838 1150a14 14 0 0 1 2 28l-8 3l1-4a14 14 0 0 1 5-27Z" fill="#fff" stroke="#2c7fe0" stroke-width="2"/><path d="M835 1156V1172L843 1168L838 1164" fill="none" stroke="#1a6fd0" stroke-width="2.600"/>
<rect x="880" y="1156" width="27" height="25" rx="2" fill="#2a2a2a"/><rect x="889" y="1147" width="27" height="26" rx="2" fill="#ececec" opacity=".8"/>
<path d="M963 1147q17 0 17 15v4q0 14-17 14l-12 2l-2-3l1-7v-10q0-15 13-15Z" fill="#6264c8"/><rect x="955" y="1156" width="15" height="15" rx="3" fill="#fff"/><path d="M970 1161l7-3v12l-7-3Z" fill="#e8e8ff"/>
<path d="M1012 1150q0-2 2-2h10l3 4h21v7h-36Z" fill="#d99a18"/><rect x="1012" y="1153" width="36" height="28" rx="1" fill="#ffd24a"/><rect x="1019" y="1169" width="22" height="12" rx="2" fill="#0f6cc0"/><rect x="1024" y="1171" width="11" height="2.500" fill="#fff"/>
<circle cx="1096" cy="1164" r="18" fill="#1a8fd8"/><path d="M1080 1156a18 18 0 0 1 34 6q0 6-8 6q-3 0-5-3q2-9-8-11q-8 0-13 2Z" fill="#4fd08c"/><path d="M1083 1176q8 6 16 4q-10-4-9-13q1-6 6-9q-12 1-15 12Z" fill="#0c5aa6"/>
<path d="M1173 1146L1180 1150V1178L1173 1182L1153 1168L1147 1172L1144 1170V1158L1147 1156L1153 1160ZM1173 1155L1161 1164L1173 1173Z" fill="#1a9ee8"/>
<circle cx="1228" cy="1164" r="16.500" fill="#fff" stroke="#111" stroke-width="2"/><text x="1228" y="1168" text-anchor="middle" style="font-size:11px;font-weight:bold;fill:#111">DELL</text>
<rect x="1276" y="1146" width="36" height="36" fill="#0a95dc"/><ellipse cx="1294" cy="1164" rx="11" ry="13" fill="none" stroke="#5fe0ff" stroke-width="3.500"/>
<path d="M1342 1152H1377V1178q0 4-4 4H1346q-4 0-4-4Z" fill="#123f78"/><path d="M1351 1152V1146Q1351 1144 1353 1144H1366Q1368 1144 1368 1146V1152" fill="none" stroke="#29a0e8" stroke-width="2"/><rect x="1352" y="1158" width="7" height="7" fill="#f25022"/><rect x="1360" y="1158" width="7" height="7" fill="#7fba00"/><rect x="1352" y="1166" width="7" height="7" fill="#00a4ef"/><rect x="1360" y="1166" width="7" height="7" fill="#ffb900"/>
<rect x="1397" y="1136" width="60" height="57" rx="5" fill="#eef2fb"/>
<path d="M1410 1146Q1410 1144 1412 1144H1441Q1443 1144 1443 1146V1181H1410Z" fill="#f26f1c"/><rect x="1410" y="1170" width="33" height="11" fill="#7f3a10"/><path d="M1421 1151H1433M1421 1151V1166M1421 1158H1431" stroke="#fff" stroke-width="3" fill="none"/><text x="1426.500" y="1179" text-anchor="middle" style="font-size:8px;font-weight:bold;fill:#eee">360</text>
<rect x="1414" y="1188" width="26" height="4" rx="2" fill="#0f74d0"/>
<!-- tray -->
<path d="M1560 1167L1567 1160L1575 1167" fill="none" stroke="#222" stroke-width="1.600"/>
<path d="M1608 1171a6 6 0 0 1 0-11a9 9 0 0 1 15 0a6 6 0 0 1 0 11Z" fill="#c8c8c8" stroke="#333" stroke-width="1.500"/>
<path d="M1652 1160Q1663 1151 1674 1160M1655 1164Q1663 1158 1671 1164M1659 1168Q1663 1165 1667 1168" fill="none" stroke="#222" stroke-width="1.400"/><circle cx="1663" cy="1171" r="1.800" fill="#222"/>
<path d="M1688 1160H1693L1699 1155V1172L1693 1167H1688Z" fill="none" stroke="#222" stroke-width="1.300"/><path d="M1702 1158Q1705 1163 1702 1169M1705 1156Q1709 1163 1705 1171" fill="none" stroke="#333" stroke-width="1.200"/>
<rect x="1724" y="1158" width="19" height="13" rx="2" fill="none" stroke="#222" stroke-width="1.500"/><rect x="1744" y="1162" width="3" height="5" fill="#222"/><rect x="1730" y="1160" width="11" height="9" fill="#222"/><path d="M1728 1153L1724 1163H1729L1727 1170" stroke="#222" stroke-width="1.800" fill="none"/>
<text x="1854" y="1158" text-anchor="end" style="font-family:'DejaVu Sans',sans-serif;font-size:15.500px;fill:#222" textLength="64" lengthAdjust="spacingAndGlyphs">8:42 PM</text>
<text x="1854" y="1182" text-anchor="end" style="font-family:'DejaVu Sans',sans-serif;font-size:15.500px;fill:#222" textLength="81" lengthAdjust="spacingAndGlyphs">5/22/2023</text>
<path d="M1878 1155q8 1 8 10v5l2 3h-20l2-3v-5q0-9 8-10Z" fill="#111"/><path d="M1873 1175h10a5 3 0 0 1-10 0Z" fill="#111"/><text x="1874" y="1171" style="font-size:10px;font-weight:bold;fill:#fff">z</text><text x="1883" y="1162" style="font-size:9px;font-weight:bold;fill:#111">z</text>
</svg>
</body></html>
